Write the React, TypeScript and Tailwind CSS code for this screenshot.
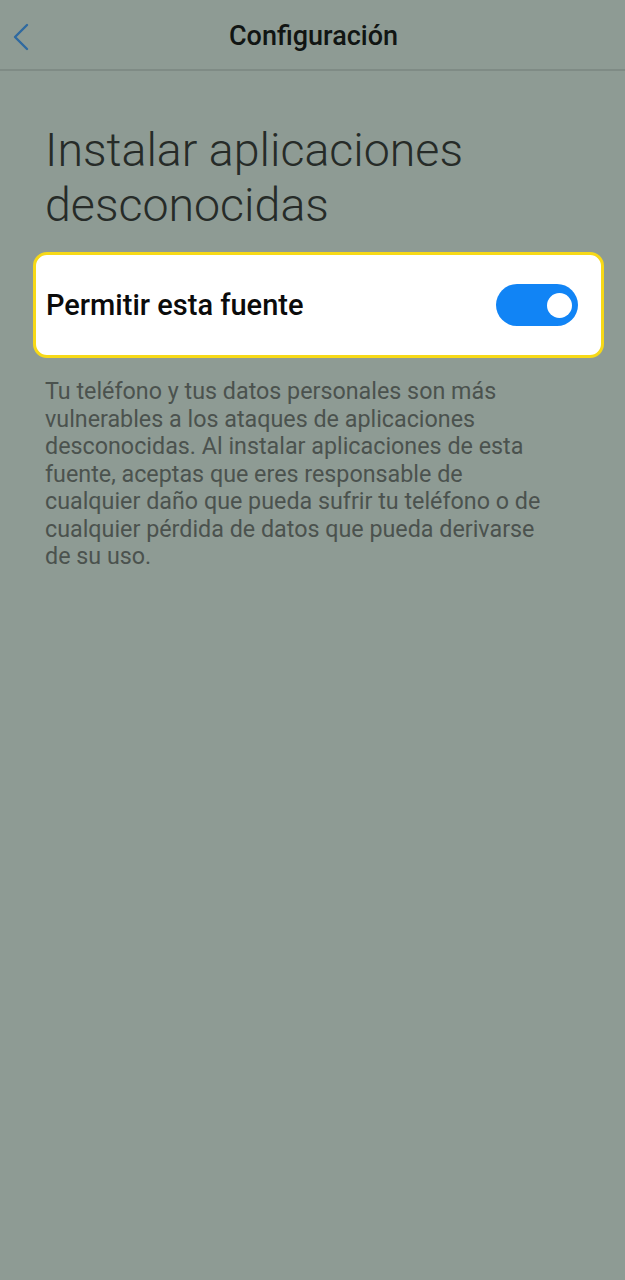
import React from "react";

export default function App() {
  return (
    <div
      className="w-[625px] h-[1280px] bg-[#8e9b94] flex flex-col"
      style={{ fontFamily: "Roboto, 'Liberation Sans', sans-serif" }}
    >
      <div className="h-[71px] flex items-center relative border-b-2 border-[#7f8b85] shrink-0">
        <svg
          className="absolute left-[10px] top-[23px]"
          width="22"
          height="28"
          viewBox="0 0 22 28"
          fill="none"
        >
          <path d="M17 2 L5 14 L17 26" stroke="#2f6aa0" strokeWidth="2.4" strokeLinecap="round" strokeLinejoin="round" />
        </svg>
        <div className="w-full text-center text-[27px] font-medium text-[#111513] pl-[2px] pt-[3px]">
          Configuración
        </div>
      </div>
      <div className="px-[45px] pt-[52px] text-[46.5px] font-light leading-[55px] text-[#262b28] whitespace-nowrap">
        Instalar aplicaciones
        <br />
        desconocidas
      </div>
      <div className="ml-[33px] mr-[21px] mt-[19px] h-[106px] rounded-[14px] border-[3px] border-[#f7d917] bg-white flex items-center justify-between pl-[10px] pr-[23px]">
        <span className="text-[29px] font-medium text-[#0b0b0b] pt-[2px]">Permitir esta fuente</span>
        <div className="w-[82px] h-[42px] rounded-full bg-[#1184f5] flex items-center justify-end pr-[6px]">
          <div className="w-[25px] h-[25px] rounded-full bg-white" />
        </div>
      </div>
      <div className="px-[45px] pt-[20px] pr-[10px] text-[23.3px] leading-[27.5px] text-[#4b524e] whitespace-nowrap">
        Tu teléfono y tus datos personales son más
        <br />
        vulnerables a los ataques de aplicaciones
        <br />
        desconocidas. Al instalar aplicaciones de esta
        <br />
        fuente, aceptas que eres responsable de
        <br />
        cualquier daño que pueda sufrir tu teléfono o de
        <br />
        cualquier pérdida de datos que pueda derivarse
        <br />
        de su uso.
      </div>
    </div>
  );
}
